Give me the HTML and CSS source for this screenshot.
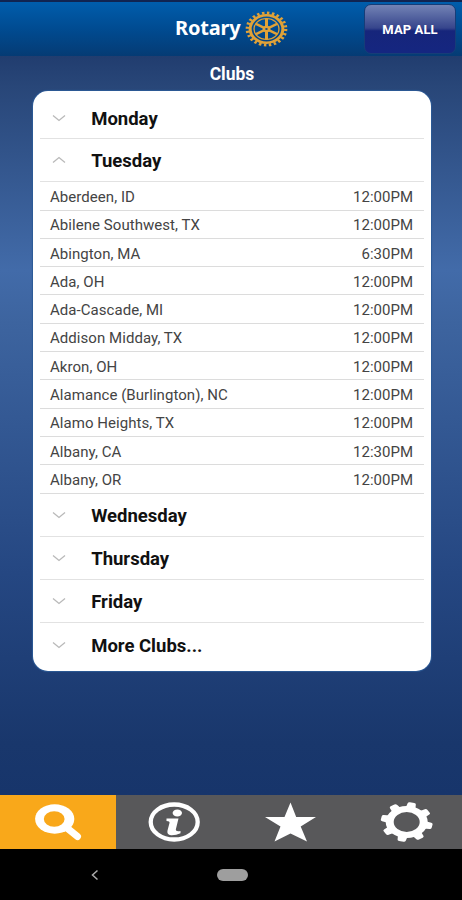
FILE: index.html
```html
<!DOCTYPE html>
<html lang="en">
<head>
<meta charset="utf-8">
<title>Rotary Clubs</title>
<link rel="stylesheet" href="styles.css">
</head>
<body>
<div class="app">
  <header class="header">
    <div class="brand">
      <span class="brand-name">Rotary</span>
      <svg class="wheel" viewBox="-50 -50 100 100" preserveAspectRatio="none">
        <g fill="none" stroke="#e0a238">
          <circle r="44.500" stroke-width="8" pathLength="48" stroke-dasharray="1 1"/>
          <circle r="38" stroke-width="7"/>
          <circle r="29" stroke-width="3"/>
          <path stroke-width="7" d="M0-29V29M-25-14.500L25 14.500M-25 14.500L25-14.500"/>
        </g>
        <circle r="9" fill="#e0a238"/><circle r="3" fill="#0b4d8e"/>
      </svg>
    </div>
    <button class="map-all">MAP ALL</button>
  </header>
  <main class="content">
    <h1 class="title">Clubs</h1>
    <section class="card">
      <h2 class="day first"><svg class="chev" viewBox="0 0 14 8"><path d="M1 1.500L7 6.500L13 1.500"/></svg>Monday</h2>
      <h2 class="day"><svg class="chev up" viewBox="0 0 14 8"><path d="M1 6.500L7 1.500L13 6.500"/></svg>Tuesday</h2>
      <ul class="clubs">
        <li><span>Aberdeen, ID</span><time>12:00PM</time></li>
        <li><span>Abilene Southwest, TX</span><time>12:00PM</time></li>
        <li><span>Abington, MA</span><time>6:30PM</time></li>
        <li><span>Ada, OH</span><time>12:00PM</time></li>
        <li><span>Ada-Cascade, MI</span><time>12:00PM</time></li>
        <li><span>Addison Midday, TX</span><time>12:00PM</time></li>
        <li><span>Akron, OH</span><time>12:00PM</time></li>
        <li><span>Alamance (Burlington), NC</span><time>12:00PM</time></li>
        <li><span>Alamo Heights, TX</span><time>12:00PM</time></li>
        <li><span>Albany, CA</span><time>12:30PM</time></li>
        <li><span>Albany, OR</span><time>12:00PM</time></li>
      </ul>
      <h2 class="day"><svg class="chev" viewBox="0 0 14 8"><path d="M1 1.500L7 6.500L13 1.500"/></svg>Wednesday</h2>
      <h2 class="day"><svg class="chev" viewBox="0 0 14 8"><path d="M1 1.500L7 6.500L13 1.500"/></svg>Thursday</h2>
      <h2 class="day"><svg class="chev" viewBox="0 0 14 8"><path d="M1 1.500L7 6.500L13 1.500"/></svg>Friday</h2>
      <h2 class="day last"><svg class="chev" viewBox="0 0 14 8"><path d="M1 1.500L7 6.500L13 1.500"/></svg>More Clubs...</h2>
    </section>
  </main>
  <nav class="tabs">
    <a class="tab active"><svg viewBox="0 0 116 54">
      <path d="M67 33L77.500 41.500" stroke="#fff" stroke-width="7" stroke-linecap="round"/>
      <ellipse cx="54.700" cy="24" rx="19.600" ry="14.700" fill="#fff"/>
      <ellipse cx="54.200" cy="24" rx="10.400" ry="7.800" fill="#f9a81a"/></svg></a>
    <a class="tab"><svg viewBox="0 0 116 54">
      <ellipse cx="58.200" cy="27" rx="23.500" ry="17.500" fill="none" stroke="#fff" stroke-width="4.300"/>
      <ellipse cx="61.300" cy="18" rx="4.700" ry="3.500" fill="#fff"/>
      <path d="M50.500 23.500H62.500L59.800 34.500Q59.500 37 64.500 36V38.300Q60 40.500 55 40.300Q50.500 39.500 51.500 35.500L53.500 28Q54 26 50.500 26Z" fill="#fff"/></svg></a>
    <a class="tab"><svg viewBox="0 0 116 54">
      <path d="M58.500 7.500L64.200 22L84 22L68.700 31.500L75 46.500L58.500 38.500L42.500 46.500L48.500 31.500L33 22L52.500 22Z" fill="#fff"/></svg></a>
    <a class="tab"><svg viewBox="0 0 116 54">
      <g transform="translate(58.700 27) scale(1 .76)" fill="none" stroke="#fff">
        <circle r="17" stroke-width="8"/>
        <g stroke-width="4" stroke-linejoin="round" fill="#fff">
          <path d="M-3-18L-2.200-24H2.200L3-18ZM-3 18L-2.200 24H2.200L3 18ZM-18-3L-24-2.200V2.200L-18 3ZM18-3L24-2.200V2.200L18 3Z" transform="rotate(12)"/>
          <path d="M-3-18L-2.200-24H2.200L3-18ZM-3 18L-2.200 24H2.200L3 18ZM-18-3L-24-2.200V2.200L-18 3ZM18-3L24-2.200V2.200L18 3Z" transform="rotate(57)"/>
        </g>
      </g></svg></a>
  </nav>
  <div class="system">
    <svg class="back" viewBox="0 0 8 12"><path d="M6.500 1.500L1.500 6L6.500 10.500"/></svg>
    <span class="home"></span>
  </div>
</div>
</body>
</html>
```
FILE: styles.css
```css
* { box-sizing: border-box; }
body { margin: 0; font-family: Roboto, sans-serif; }
.app {
  width: 462px; height: 900px; display: flex; flex-direction: column; overflow: hidden;
  background: #000;
}
.header {
  height: 56px; flex: none; border-top: 2px solid #102451;
  background: linear-gradient(#005dac, #004b91 50%, #053b74);
  display: grid; grid-template-columns: 175px 1fr 98px;
}
.brand { grid-column: 2; display: flex; align-items: flex-start; }
.brand-name {
  width: 70px; padding-top: 12px; color: #fff; font: 700 20px/27px "Noto Sans", sans-serif; letter-spacing: -.2px;
}
.wheel { width: 43px; height: 36px; margin-top: 8.500px; }
.map-all {
  width: 92px; height: 50px; margin-top: 2px; padding: 0; color: #fff;
  font: 700 13px Roboto, sans-serif; letter-spacing: .1px; border: 1.500px solid #163d78; border-radius: 7px;
  background: linear-gradient(#7383b5, #36458c 48%, #16257b 54%, #152680);
}
.content {
  flex: 1; padding: 8px 31px 0 33px;
  background: linear-gradient(#213d6f, #284678 4%, #426ba9 29%, #3d649f 36%, #254782 70%, #19376c 93%, #17356b);
}
.title { margin: 0; text-align: center; color: #fff; font-size: 17.500px; line-height: 21px; font-weight: 700; }
.card { margin-top: 6px; height: 580px; background: #fff; border-radius: 15px; padding: 0 7px; box-shadow: 0 0 1px 1px #2c5a96; }
.day {
  margin: 0; height: 43.300px; border-bottom: 1.500px solid #e2e2e2; display: flex; align-items: center;
  font-size: 18.500px; font-weight: 700; color: #111; padding: 2px 0 0 12px;
}
.day.first { height: 48px; padding-top: 8px; }
.day.last { border: 0; }
.chev { width: 14px; height: 8px; margin: -2px 25.200px 0 0; fill: none; stroke: #b9b9b9; stroke-width: 1.300; }
.clubs { list-style: none; margin: 0; padding: 0; }
.clubs li {
  height: 28.300px; display: flex; justify-content: space-between; align-items: center;
  padding: 2px 11px 0 10px; border-bottom: 1.500px solid #dcdcdc; font-size: 15px; color: #444;
}
.clubs span { letter-spacing: .05px; }
.tabs { height: 54.500px; flex: none; display: grid; grid-template-columns: repeat(4, 1fr); background: #58585a; }
.tab { display: block; }
.tab svg { display: block; width: 116px; height: 54px; }
.active { background: #f9a81a; }
.system { height: 51px; flex: none; display: flex; align-items: center; padding-left: 91px; }
.back { width: 8px; height: 12px; fill: none; stroke: #aaa; stroke-width: 1.500; }
.home { width: 31px; height: 12px; margin-left: 118px; border-radius: 6px; background: #9e9e9e; }
```
